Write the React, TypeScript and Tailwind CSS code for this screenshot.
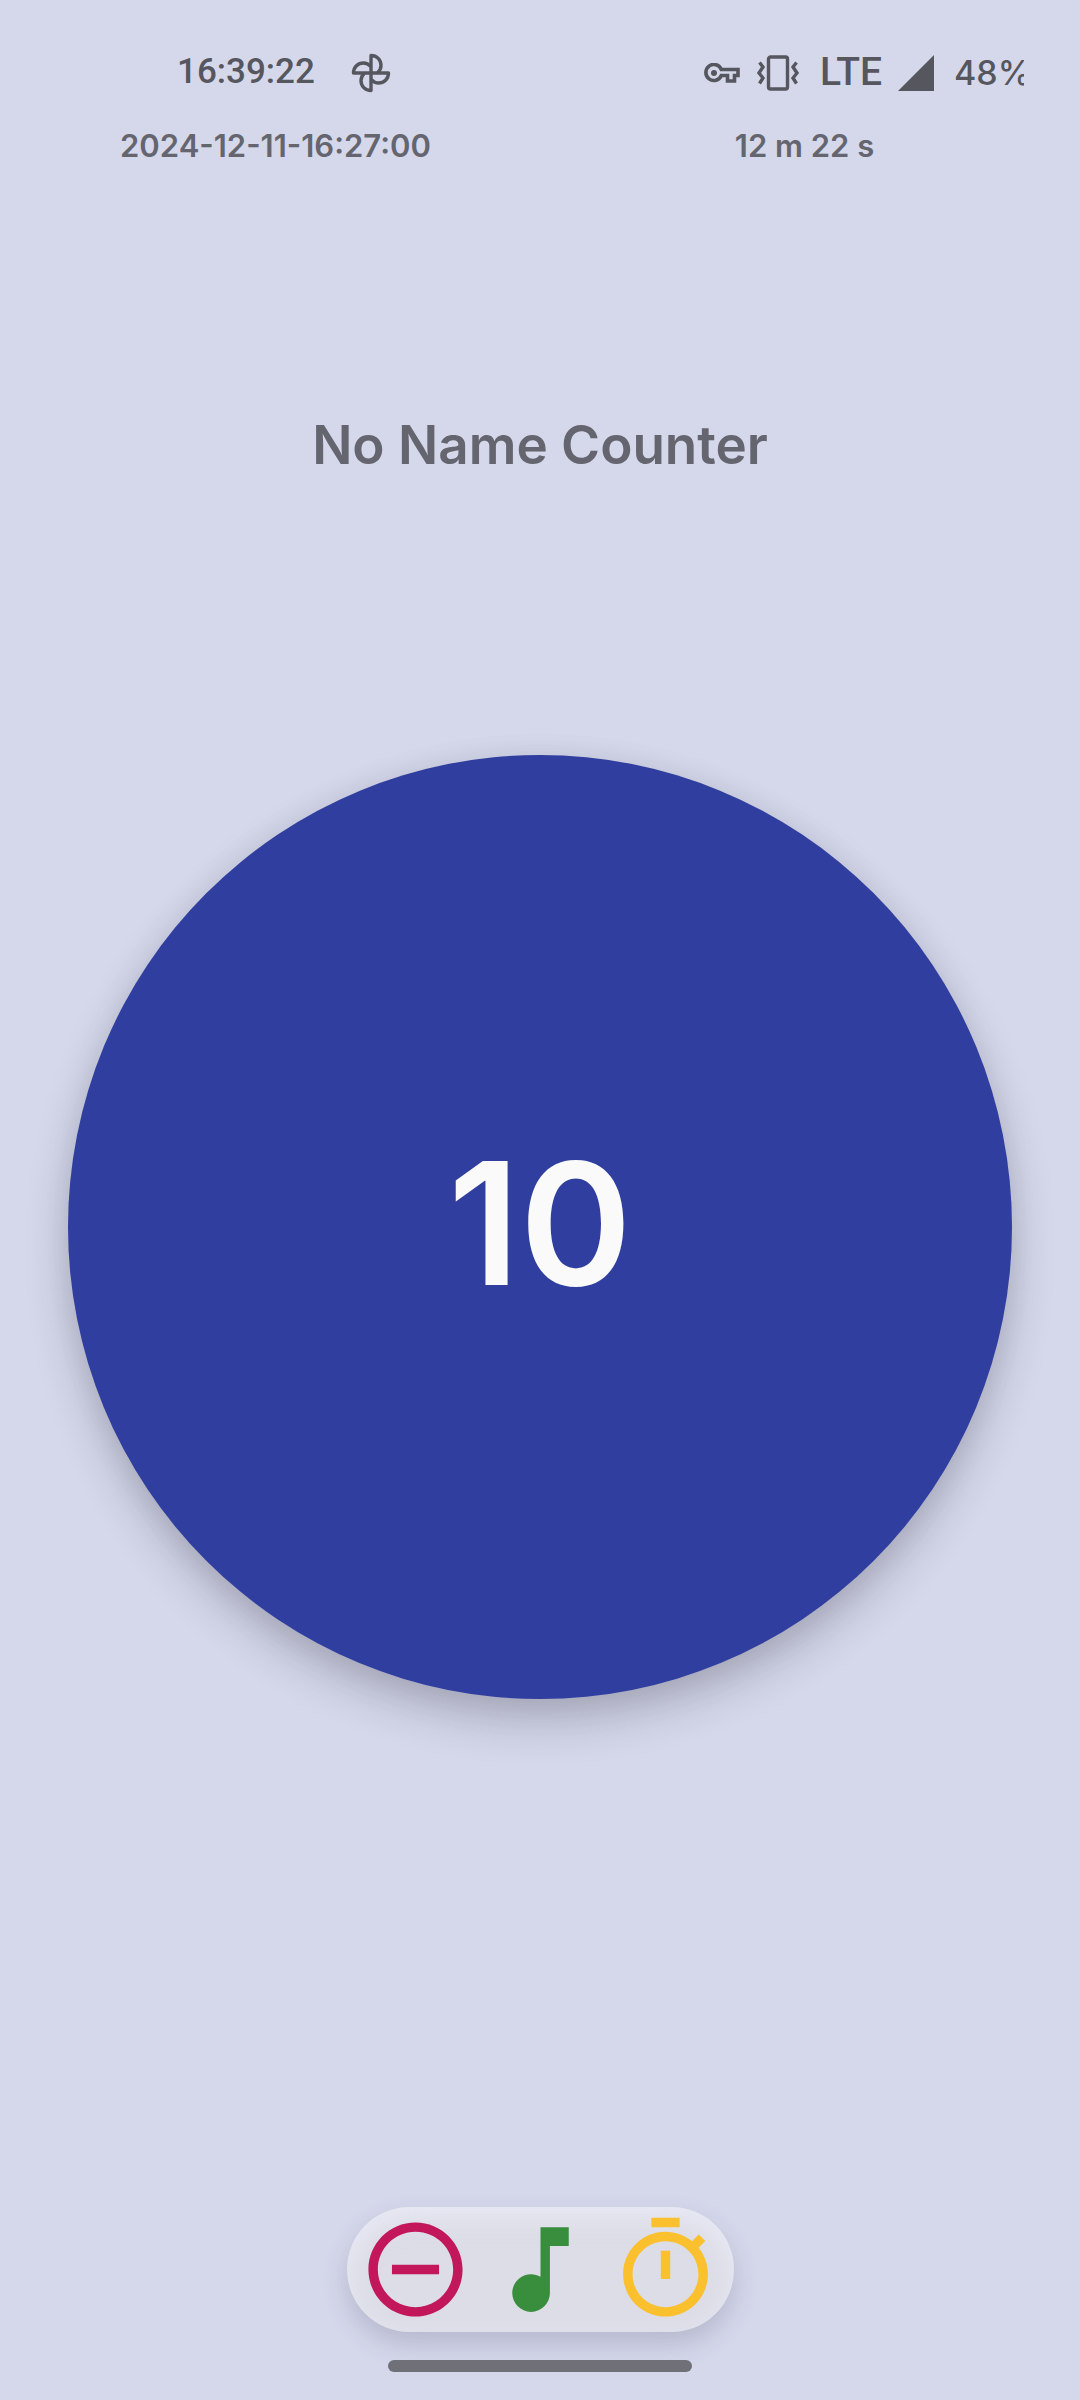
import React from "react";

const actions = [
  {
    label: "Decrease",
    color: "text-[#c2185b]",
    path: "M7 11v2h10v-2H7zm5-9C6.48 2 2 6.48 2 12s4.48 10 10 10 10-4.48 10-10S17.52 2 12 2zm0 18c-4.41 0-8-3.59-8-8s3.59-8 8-8 8 3.59 8 8-3.59 8-8 8z",
  },
  {
    label: "Sound",
    color: "text-[#388e3c]",
    path: "M12 3v10.55c-.59-.34-1.27-.55-2-.55-2.21 0-4 1.79-4 4s1.79 4 4 4 4-1.79 4-4V7h4V3h-6z",
  },
  {
    label: "Timer",
    color: "text-[#fbc02d]",
    path: "M15 1H9v2h6V1zm-4 13h2V8h-2v6zm8.03-6.61 1.42-1.42c-.43-.51-.9-.99-1.41-1.41l-1.42 1.42C16.07 4.74 14.12 4 12 4c-4.97 0-9 4.03-9 9s4.02 9 9 9 9-4.03 9-9c0-2.12-.74-4.07-1.97-5.61zM12 20c-3.87 0-7-3.13-7-7s3.13-7 7-7 7 3.13 7 7-3.13 7-7 7z",
  },
];

function FanIcon() {
  return (
    <svg className="ml-9 size-10" viewBox="0 0 40 40" fill="none" stroke="currentColor" strokeWidth="3.400" strokeLinejoin="round" aria-hidden="true">
      <path d="M20 20V2.500C26 2.500 30 7 30 12.500C30 15.500 28.500 18 26.500 20" />
      <path d="M20 20H37.500C37.500 26 33 30 27.500 30C24.500 30 22 28.500 20 26.500" />
      <path d="M20 20V37.500C14 37.500 10 33 10 27.500C10 24.500 11.500 22 13.500 20" />
      <path d="M20 20H2.500C2.500 14 7 10 12.500 10C15.500 10 18 11.500 20 13.500" />
    </svg>
  );
}

function KeyIcon() {
  return (
    <svg className="h-5 w-9" viewBox="0 0 36 20" fill="none" stroke="currentColor" strokeWidth="3.600" aria-hidden="true">
      <path d="M17.300 6.500H34V12.500H30.500V18H23.500V12.500H17.300A8 8 0 1 1 17.300 6.500Z" />
      <circle cx="10" cy="10" r="3" fill="currentColor" stroke="none" />
    </svg>
  );
}

function VibrateIcon() {
  return (
    <svg className="ml-4 h-9 w-11" viewBox="0 0 44 36" fill="none" stroke="currentColor" strokeWidth="3.400" aria-hidden="true">
      <rect x="12.500" y="2" width="19" height="32" rx="2" />
      <path d="M3.500 7.500L7 12L3 18L7 23L3.500 28.500M40.500 7.500L37 12L41 18L37 23L40.500 28.500" />
    </svg>
  );
}

export default function App() {
  return (
    <div className="flex min-h-screen flex-col items-center bg-[#d5d8eb] font-['Inter',sans-serif] text-[#64656e]">
      <header className="w-full">
        <div className="flex h-[121px] items-center justify-between pt-6 pr-14 pl-[177px] font-['Roboto',sans-serif] text-[35px] font-medium text-[#55565e]">
          <div className="flex items-center">
            <time>16:39:22</time>
            <FanIcon />
          </div>
          <div className="flex items-center">
            <KeyIcon />
            <VibrateIcon />
            <span className="ml-5 text-[39px]">LTE</span>
            <svg className="ml-4 size-9" viewBox="0 0 36 36" fill="currentColor" aria-hidden="true">
              <path d="M36 0V36H0Z" />
            </svg>
            <span className="ml-5 w-[70px] overflow-hidden font-['Inter',sans-serif] text-[34px]">48%</span>
          </div>
        </div>
        <div className="grid grid-cols-2 px-[11px] text-center text-[31px] leading-[50px] font-semibold">
          <time>2024-12-11-16:27:00</time>
          <span>12 m 22 s</span>
        </div>
      </header>

      <main className="flex w-full flex-1 flex-col items-center px-[68px]">
        <h1 className="mt-[238px] text-[53px] leading-[72px] font-semibold">No Name Counter</h1>
        <button
          type="button"
          aria-label="Count: 10"
          className="mt-[274px] flex aspect-square w-full items-center justify-center rounded-full bg-[#303f9f] pb-2 text-[170px] leading-none font-semibold text-[#fafafa] shadow-[0_22px_44px_rgba(30,30,40,0.24),0_0_30px_rgba(30,30,40,0.05)]"
        >
          10
        </button>
      </main>

      <footer className="flex flex-col items-center pb-7">
        <nav aria-label="Counter actions" className="flex rounded-full bg-[#dcdde6] px-1.5 shadow-[0_12px_26px_rgba(60,60,90,0.2),inset_0_10px_28px_rgba(238,240,252,0.7)]">
          {actions.map((action) => (
            <button key={action.label} type="button" aria-label={action.label} className={`flex size-[125px] items-center justify-center ${action.color}`}>
              <svg className="size-[113px]" viewBox="0 0 24 24" fill="currentColor" aria-hidden="true">
                <path d={action.path} />
              </svg>
            </button>
          ))}
        </nav>
        <div className="mt-7 h-3 w-[304px] rounded-full bg-[#6f7078]" />
      </footer>
    </div>
  );
}
